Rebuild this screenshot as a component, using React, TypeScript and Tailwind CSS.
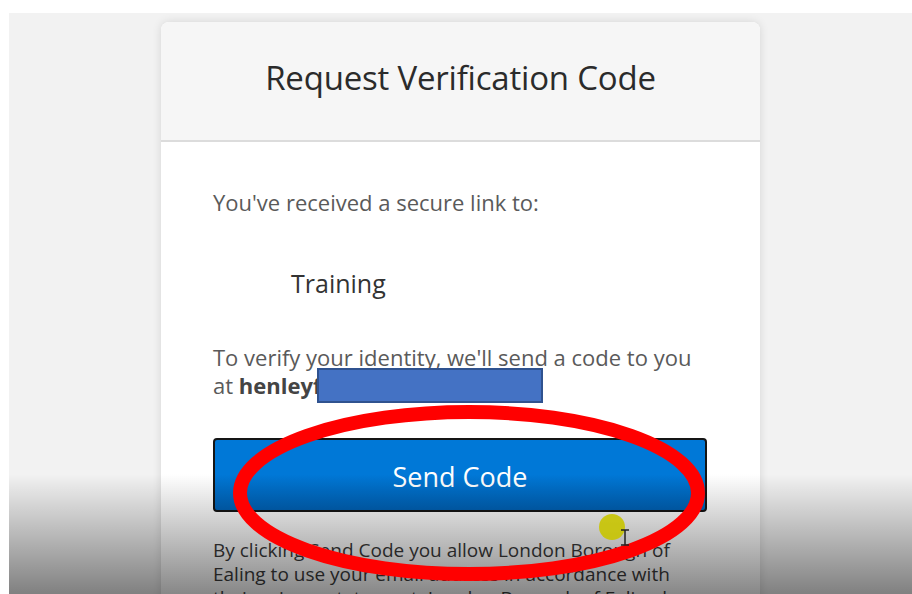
import React from "react";

const font = { fontFamily: '"Open Sans", "Noto Sans", sans-serif' };

export default function App() {
  return (
    <div className="relative h-[594px] w-[912px] overflow-hidden bg-white pl-[9px] pt-[13px]" style={font}>
      <div className="h-[581px] w-full bg-[#f2f2f2] pt-[9px]">
        <div className="mx-auto w-[599px] overflow-hidden rounded-[8px] bg-white shadow-[0_0_10px_rgba(0,0,0,0.12)]">
          <div className="flex h-[120px] items-center justify-center border-b-2 border-[#dcdcdc] bg-[#f6f6f6] pb-[6px]">
            <h1 className="text-[33px] font-normal tracking-[-0.2px] text-[#2b2b2b]">Request Verification Code</h1>
          </div>
          <div className="flex flex-col px-[52px] pt-[46px]">
            <p className="text-[22px] leading-[28px] text-[#5a5a5a]">You've received a secure link to:</p>
            <p className="mt-[51px] pl-[78px] text-[25px] leading-[32px] text-[#333]">Training</p>
            <p className="relative mt-[44px] text-[22px] leading-[28px] text-[#5a5a5a]">
              To verify your identity, we'll send a code to you
              <br />
              at <span className="font-bold text-[#444]">henleyf</span>
              <span className="absolute left-[104px] top-[25px] h-[35px] w-[226px] border-2 border-[#2f528f] bg-[#4472c4]" />
            </p>
            <button className="mt-[39px] flex h-[74px] w-[494px] items-center justify-center rounded-[4px] border-2 border-[#151515] bg-gradient-to-b from-[#0078d7] via-[#0078d7] to-[#0063b8] pt-[4px] text-[27px] text-white">
              Send Code
            </button>
            <p className="mt-[26px] text-[19px] leading-[24px] text-[#3a3a3a]">
              By clicking Send Code you allow London Borough of
              <br />
              Ealing to use your email address in accordance with
              <br />
              their privacy statement. London Borough of Ealing has
            </p>
          </div>
        </div>
      </div>

      {/* player shading along the bottom */}
      <div className="pointer-events-none absolute bottom-0 left-0 right-0 h-[120px] bg-gradient-to-b from-transparent to-[rgba(0,0,0,0.47)]" />
      <div className="pointer-events-none absolute left-0 top-0 h-[594px] w-[9px] bg-white" />

      {/* highlight annotation */}
      <svg className="pointer-events-none absolute left-0 top-0" width="912" height="594" viewBox="0 0 912 594">
        <ellipse cx="469" cy="493" rx="229" ry="81" fill="none" stroke="#ff0000" strokeWidth="14" />
        <circle cx="612" cy="527" r="13" fill="#c8c400" opacity="0.9" />
        <path d="M621 530h8M625 530v15M621 545h8" stroke="#222" strokeWidth="1.5" fill="none" />
      </svg>
    </div>
  );
}
